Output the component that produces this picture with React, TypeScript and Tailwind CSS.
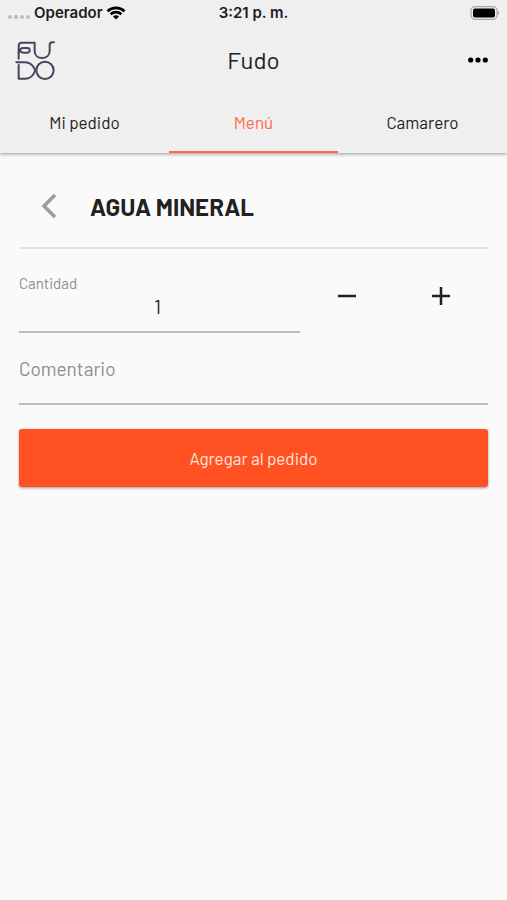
import { useState } from "react";

function FudoLogo() {
  return (
    <svg viewBox="30 27 120 120" className="size-10" fill="none" stroke="#45465c" strokeWidth="6" strokeLinecap="round" strokeLinejoin="round" aria-label="Fudo" role="img">
      <path d="M41 83V45Q41 35 50 35H89V59C89 73 98 81 111 81S134 73 134 59V43Q134 34 142 34H147" />
      <path d="M41 65C43 55 48 51 55 51H67Q74 51 74 58T67 65H55Q47 65 45 58" />
      <path d="M34 94H60C78 94 85 104 91 118C85 133 78 143 60 143H41V102" />
      <circle cx="120" cy="118" r="26" />
    </svg>
  );
}

function StatusBar() {
  return (
    <div className="grid h-[26px] grid-cols-3 items-center px-2 font-['Inter','Liberation_Sans',sans-serif] text-[15px] font-semibold text-[#1c1c1c]">
      <div className="flex items-center">
        <span className="mt-2 flex w-[26px] gap-[2px]">
          {[0, 1, 2, 3].map((dot) => (
            <span key={dot} className="size-1 rounded-full bg-[#bdbdbd]" />
          ))}
        </span>
        <span className="w-[72px]">Operador</span>
        <svg viewBox="0 0 20 14" className="h-[14px] w-5" aria-hidden="true">
          <g fill="none" stroke="#000" strokeWidth="2.7">
            <path d="M1.5 5.2C6.3.8 13.7.8 18.5 5.2" />
            <path d="M4.6 8.3C7.7 5.5 12.3 5.5 15.4 8.3" />
          </g>
          <path d="M6.9 10.4Q10 7.9 13.1 10.4L10 13.5Z" />
        </svg>
      </div>
      <span className="text-center">3:21 p. m.</span>
      <svg viewBox="0 0 29 14" className="h-[14px] w-[29px] justify-self-end" aria-hidden="true">
        <rect x="1" y=".7" width="26" height="12.6" rx="4" fill="none" stroke="#a9a9a9" strokeWidth="1.3" />
        <rect x="3" y="2.5" width="22" height="9" rx="2" />
        <path d="M28 5v4q1-.5 1-2t-1-2" fill="#999" />
      </svg>
    </div>
  );
}

const tabs = ["Mi pedido", "Menú", "Camarero"];

export default function App() {
  const [active, setActive] = useState("Menú");
  const [quantity, setQuantity] = useState(1);

  return (
    <div className="min-h-screen bg-[#fafafa] font-['Barlow','Roboto',sans-serif] text-[#212121]">
      <header className="bg-[#efefef] shadow-[0_1px_4px_rgba(0,0,0,0.4)]">
        <StatusBar />
        <div className="grid h-[68px] grid-cols-3 items-center px-[15px]">
          <FudoLogo />
          <h1 className="text-center text-2xl">Fudo</h1>
          <button type="button" aria-label="Más opciones" className="flex h-8 items-center justify-end pr-1">
            <svg viewBox="0 0 20 6" className="h-[6px] w-5" aria-hidden="true">
              <circle cx="2.7" cy="3" r="2.6" />
              <circle cx="10" cy="3" r="2.6" />
              <circle cx="17.3" cy="3" r="2.6" />
            </svg>
          </button>
        </div>
        <nav className="grid h-[59px] grid-cols-3">
          {tabs.map((tab) => (
            <button
              key={tab}
              type="button"
              onClick={() => setActive(tab)}
              aria-current={tab === active ? "page" : undefined}
              className={
                tab === active
                  ? "border-b-2 border-[#ff6a45] text-[17px] text-[#ff6a45]"
                  : "border-b-2 border-transparent text-[17px]"
              }
            >
              {tab}
            </button>
          ))}
        </nav>
      </header>

      <main className="px-[19px]">
        <div className="flex h-24 items-center border-b-2 border-[#e2e2e2] pt-[14px]">
          <button type="button" aria-label="Volver" className="flex w-[71px] pl-5">
            <svg viewBox="0 0 18 26" className="h-[26px] w-[18px]" fill="none" stroke="#9c9c9c" strokeWidth="3.5" aria-hidden="true">
              <path d="M16 1L5 12L16 23" />
            </svg>
          </button>
          <h2 className="text-2xl font-bold">AGUA MINERAL</h2>
        </div>

        <form onSubmit={(event) => event.preventDefault()}>
          <div className="grid grid-cols-5">
            <div className="col-span-3 flex h-[84px] flex-col border-b-2 border-[#bdbdbd] pt-6">
              <label htmlFor="cantidad" className="text-[15px] leading-5 text-[#8e8e8e]">Cantidad</label>
              <input
                id="cantidad"
                inputMode="numeric"
                value={quantity}
                onChange={(event) => setQuantity(Number(event.target.value) || 1)}
                className="h-7 w-full bg-transparent pr-1 text-center text-[19px] outline-none"
              />
            </div>
            <button type="button" aria-label="Restar" onClick={() => setQuantity(Math.max(1, quantity - 1))} className="flex h-[94px] items-center justify-center">
              <svg viewBox="0 0 18 18" className="size-[18px]" stroke="#212121" strokeWidth="2.5" aria-hidden="true">
                <path d="M0 9H18" />
              </svg>
            </button>
            <button type="button" aria-label="Sumar" onClick={() => setQuantity(quantity + 1)} className="flex h-[94px] items-center justify-center">
              <svg viewBox="0 0 18 18" className="size-[18px]" stroke="#212121" strokeWidth="2.5" aria-hidden="true">
                <path d="M0 9H18M9 0V18" />
              </svg>
            </button>
          </div>
          <input
            aria-label="Comentario"
            placeholder="Comentario"
            className="block h-[62px] w-full border-b-2 border-[#bdbdbd] bg-transparent pb-[10px] text-[19px] outline-none placeholder:text-[#8e8e8e]"
          />
          <button type="submit" className="mt-6 h-[58px] w-full rounded-[3px] bg-[#ff5122] pt-[2px] text-[17px] text-[#ffe6df] shadow-[0_1px_3px_rgba(0,0,0,0.4)]">
            Agregar al pedido
          </button>
        </form>
      </main>
    </div>
  );
}
